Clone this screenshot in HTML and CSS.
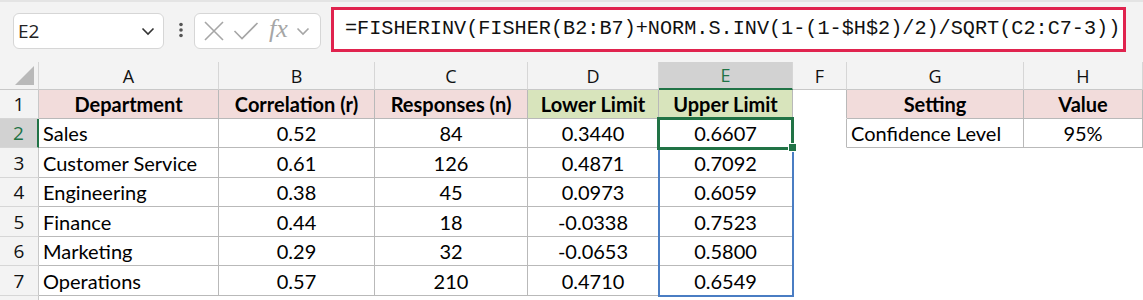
FILE: index.html
```html
<!DOCTYPE html>
<html lang="en">
<head>
<meta charset="UTF-8">
<title>Confidence Limits</title>
<link rel="stylesheet" href="styles.css">
</head>
<body>
<div class="formula-bar">
  <div class="name-box">
    <span>E2</span>
    <svg class="chev" width="14" height="9" viewBox="0 0 14 9"><path d="M1.5 1.5 L7 7 L12.5 1.5" fill="none" stroke="#333" stroke-width="1.6"/></svg>
  </div>
  <svg class="dots" width="6" height="16" viewBox="0 0 6 16"><circle cx="3" cy="2.5" r="1.8" fill="#555"/><circle cx="3" cy="8" r="1.8" fill="#555"/><circle cx="3" cy="13.5" r="1.8" fill="#555"/></svg>
  <div class="fx-box">
    <svg width="22" height="22" viewBox="0 0 22 22"><path d="M2 2 L20 20 M20 2 L2 20" stroke="#a6a6a6" stroke-width="1.6" fill="none"/></svg>
    <svg width="26" height="20" viewBox="0 0 26 20"><path d="M1.5 10 L9 17.5 L24.5 2" stroke="#a6a6a6" stroke-width="1.6" fill="none"/></svg>
    <span class="fx">fx</span>
    <svg width="14" height="9" viewBox="0 0 14 9"><path d="M1.5 1.5 L7 7 L12.5 1.5" fill="none" stroke="#a6a6a6" stroke-width="1.6"/></svg>
  </div>
  <div class="formula">=FISHERINV(FISHER(B2:B7)+NORM.S.INV(1-(1-$H$2)/2)/SQRT(C2:C7-3))</div>
</div>

<table class="sheet">
  <colgroup>
    <col style="width:39px"><col style="width:180px"><col style="width:156px"><col style="width:153px">
    <col style="width:131px"><col style="width:134px"><col style="width:54px"><col style="width:177px"><col style="width:119px">
  </colgroup>
  <tr class="col-heads">
    <th class="corner"><span class="tri"></span></th>
    <th>A</th><th>B</th><th>C</th><th>D</th><th class="active">E</th><th>F</th><th>G</th><th>H</th>
  </tr>
  <tr class="r29">
    <th class="row-head">1</th>
    <td class="t pink c b">Department</td>
    <td class="t pink c b">Correlation (r)</td>
    <td class="t pink c b">Responses (n)</td>
    <td class="t green c b">Lower Limit</td>
    <td class="t green c b">Upper Limit</td>
    <td class="edge"></td>
    <td class="t pink c b">Setting</td>
    <td class="t pink c b">Value</td>
  </tr>
  <tr class="r29">
    <th class="row-head active">2</th>
    <td class="t">Sales</td><td class="t c">0.52</td><td class="t c">84</td><td class="t c">0.3440</td>
    <td class="t c sel">0.6607<span class="range"></span><span class="cursor"></span><span class="handle"></span></td>
    <td class="edge"></td>
    <td class="t">Confidence Level</td><td class="t c">95%</td>
  </tr>
  <tr class="r30">
    <th class="row-head">3</th>
    <td class="t">Customer Service</td><td class="t c">0.61</td><td class="t c">126</td><td class="t c">0.4871</td><td class="t c">0.7092</td>
    <td></td><td></td><td></td>
  </tr>
  <tr class="r29">
    <th class="row-head">4</th>
    <td class="t">Engineering</td><td class="t c">0.38</td><td class="t c">45</td><td class="t c">0.0973</td><td class="t c">0.6059</td>
    <td></td><td></td><td></td>
  </tr>
  <tr class="r30">
    <th class="row-head">5</th>
    <td class="t">Finance</td><td class="t c">0.44</td><td class="t c">18</td><td class="t c">-0.0338</td><td class="t c">0.7523</td>
    <td></td><td></td><td></td>
  </tr>
  <tr class="r29">
    <th class="row-head">6</th>
    <td class="t">Marketing</td><td class="t c">0.29</td><td class="t c">32</td><td class="t c">-0.0653</td><td class="t c">0.5800</td>
    <td></td><td></td><td></td>
  </tr>
  <tr class="r30">
    <th class="row-head">7</th>
    <td class="t">Operations</td><td class="t c">0.57</td><td class="t c">210</td><td class="t c">0.4710</td><td class="t c">0.6549</td>
    <td></td><td></td><td></td>
  </tr>
  <tr class="r29">
    <th class="row-head"></th>
    <td></td><td></td><td></td><td></td><td></td><td></td><td></td><td></td>
  </tr>
</table>
</body>
</html>
```

FILE: styles.css
```css
body {
  margin: 0;
  background-color: #ffffff;
  font-family: Lato, "Liberation Sans", sans-serif;
  color: #000;
  overflow: hidden;
}
.formula-bar {
  height: 62px;
  background-color: #f3f3f3;
  border-top: 2px solid #e4e4e4;
  box-sizing: border-box;
  display: flex;
  align-items: flex-start;
}
.name-box {
  margin: 11px 0 0 13px;
  width: 151px;
  height: 36px;
  box-sizing: border-box;
  background-color: #fff;
  border: 1px solid #d6d6d6;
  border-radius: 6px;
  display: flex;
  align-items: center;
  justify-content: space-between;
  padding: 0 8px 0 4px;
  font-family: "Open Sans", sans-serif;
  font-size: 19px;
  color: #222;
}
.dots {
  margin: 20px 0 0 14px;
}
.fx-box {
  margin: 11px 0 0 10px;
  width: 127px;
  height: 36px;
  box-sizing: border-box;
  background-color: #fff;
  border: 1px solid #d6d6d6;
  border-radius: 6px;
  display: flex;
  align-items: center;
  padding: 0 4px 0 8px;
  gap: 8px;
}
.fx {
  font-family: "Liberation Serif", serif;
  font-style: italic;
  font-size: 26px;
  color: #a6a6a6;
  margin-left: 2px;
  margin-top: -4px;
}
.formula {
  margin: 5px 0 0 10px;
  width: 795px;
  height: 45px;
  box-sizing: border-box;
  background-color: #fff;
  border: 3px solid #e0234e;
  font-family: "Liberation Mono", monospace;
  font-size: 20.2px;
  line-height: 38px;
  padding-left: 11px;
  white-space: nowrap;
  color: #111;
}
.sheet {
  table-layout: fixed;
  border-collapse: separate;
  border-spacing: 0;
  width: 1143px;
}
.sheet th, .sheet td {
  padding: 0;
  border-right: 1px solid #ffffff;
  border-bottom: 1px solid #ffffff;
  white-space: nowrap;
  overflow: visible;
}
.col-heads {
  height: 28px;
}
.r29 {
  height: 29px;
}
.r30 {
  height: 30px;
}
.col-heads th {
  background-color: #f3f3f3;
  border-right: 1px solid #d6d6d6;
  border-bottom: 1px solid #c8c8c8;
  font-family: "Open Sans", sans-serif;
  font-weight: normal;
  font-size: 18px;
  line-height: 22px;
  color: #111;
  vertical-align: middle;
}
.col-heads th.active {
  background-color: #d2d2d2;
  color: #217346;
  border-bottom: 2px solid #217346;
}
.corner {
  position: relative;
}
.tri {
  position: absolute;
  right: 4px;
  bottom: 4px;
  width: 0;
  height: 0;
  border-left: 19px solid transparent;
  border-bottom: 19px solid #b9b9b9;
}
.sheet .row-head {
  background-color: #f3f3f3;
  border-right: 1px solid #c8c8c8;
  border-bottom: 1px solid #d6d6d6;
  font-family: "Open Sans", sans-serif;
  font-weight: normal;
  font-size: 19px;
  line-height: 22px;
  text-align: center;
  vertical-align: middle;
  color: #111;
}
.sheet .row-head.active {
  background-color: #d2d2d2;
  color: #217346;
  border-right: 2px solid #217346;
}
.sheet td {
  font-size: 20px;
  line-height: 22px;
  vertical-align: bottom;
  padding: 0 0 3px 4px;
}
.sheet td.t {
  border-right-color: #b9b9b9;
  border-bottom-color: #b9b9b9;
}
.sheet td.edge {
  border-right-color: #b9b9b9;
}
.c {
  text-align: center;
  padding-left: 0 !important;
}
.b {
  font-weight: bold;
}
.pink {
  background-color: #f2dcdb;
}
.green {
  background-color: #d8e4bc;
}
.sel {
  position: relative;
}
.range {
  position: absolute;
  left: -1px;
  top: -1px;
  width: 136px;
  height: 179px;
  border: 2px solid #4a7dc3;
  box-sizing: border-box;
}
.cursor {
  position: absolute;
  left: -2px;
  top: -2px;
  width: 137px;
  height: 33px;
  border: 3px solid #217346;
  box-sizing: border-box;
}
.handle {
  position: absolute;
  right: -5px;
  bottom: -5px;
  width: 7px;
  height: 7px;
  background-color: #217346;
  border: 1px solid #fff;
}
```
